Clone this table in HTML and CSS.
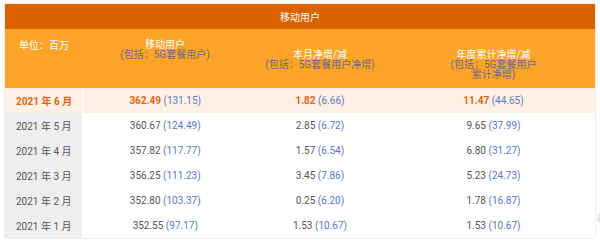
FILE: index.html
```html
<!DOCTYPE html>
<html lang="zh">
<head>
<meta charset="utf-8">
<link rel="stylesheet" href="styles.css">
</head>
<body>
<div class="wrap">
<table class="tbl">
  <colgroup>
    <col class="c1"><col class="c2"><col class="c3"><col class="c4">
  </colgroup>
  <thead>
    <tr class="title"><th colspan="4">移动用户</th></tr>
    <tr class="head">
      <th class="unit">单位：百万</th>
      <th class="h2">移动用户<br><span class="sub">(包括：5G套餐用户)</span></th>
      <th class="h3">本月净增/减<br><span class="sub">(包括：5G套餐用户净增)</span></th>
      <th class="h3">年度累计净增/减<br><span class="sub">(包括：5G套餐用户<br>累计净增)</span></th>
    </tr>
  </thead>
  <tbody>
    <tr class="hl">
      <td class="m">2021 年 6 月</td>
      <td><b>362.49</b> <span class="p">(131.15)</span></td>
      <td><b>1.82</b> <span class="p">(6.66)</span></td>
      <td><b>11.47</b> <span class="p">(44.65)</span></td>
    </tr>
    <tr>
      <td class="m">2021 年 5 月</td>
      <td>360.67 <span class="p">(124.49)</span></td>
      <td>2.85 <span class="p">(6.72)</span></td>
      <td>9.65 <span class="p">(37.99)</span></td>
    </tr>
    <tr>
      <td class="m">2021 年 4 月</td>
      <td>357.82 <span class="p">(117.77)</span></td>
      <td>1.57 <span class="p">(6.54)</span></td>
      <td>6.80 <span class="p">(31.27)</span></td>
    </tr>
    <tr>
      <td class="m">2021 年 3 月</td>
      <td>356.25 <span class="p">(111.23)</span></td>
      <td>3.45 <span class="p">(7.86)</span></td>
      <td>5.23 <span class="p">(24.73)</span></td>
    </tr>
    <tr>
      <td class="m">2021 年 2 月</td>
      <td>352.80 <span class="p">(103.37)</span></td>
      <td>0.25 <span class="p">(6.20)</span></td>
      <td>1.78 <span class="p">(16.87)</span></td>
    </tr>
    <tr>
      <td class="m">2021 年 1 月</td>
      <td>352.55 <span class="p">(97.17)</span></td>
      <td>1.53 <span class="p">(10.67)</span></td>
      <td>1.53 <span class="p">(10.67)</span></td>
    </tr>
  </tbody>
</table>
</div>
<div class="edge-btn"></div>
</body>
</html>
```

FILE: styles.css
```css
html, body {
  margin: 0;
  padding: 0;
  background: #ffffff;
}
body {
  font-family: "Roboto", "Noto Sans CJK SC", sans-serif;
  font-size: 10px;
  color: #555555;
  position: relative;
  overflow: hidden;
  height: 240px;
}
.wrap {
  margin: 4px 0 0 5px;
  width: 590px;
  box-shadow: 0 0 2px rgba(0, 0, 0, 0.18);
}
.tbl {
  width: 590px;
  border-collapse: collapse;
  table-layout: fixed;
}
.c1 { width: 77px; }
.c2 { width: 166px; }
.c3 { width: 144px; }
.c4 { width: 203px; }
.tbl th, .tbl td {
  padding: 0;
  font-weight: normal;
}
.title th {
  height: 25px;
  background: #dc6200;
  color: #ffffff;
  font-size: 10px;
  text-align: center;
  vertical-align: middle;
}
.head th {
  height: 59px;
  background: #fca428;
  color: #ffffff;
  vertical-align: top;
  text-align: center;
  line-height: 10px;
  padding-top: 11px;
  box-sizing: border-box;
}
.head th.unit {
  text-align: left;
  padding-left: 14px;
  padding-top: 12px;
}
.head th.h3 {
  padding-top: 21px;
}
.sub {
  color: #6c6a86;
}
.tbl td {
  height: 25px;
  text-align: center;
  vertical-align: middle;
  background: #ffffff;
}
.tbl td.m {
  text-align: left;
  padding-left: 11px;
  background: #efefef;
  border-right: 1px solid #ffffff;
}
.p {
  color: #5a78cc;
}
.hl td, .hl td.m {
  background: #fdf1e4;
}
.hl td.m, .hl b {
  color: #e2661a;
  font-weight: bold;
}
.edge-btn {
  position: absolute;
  left: 597px;
  top: 212px;
  width: 12px;
  height: 12px;
  border-radius: 50%;
  background: #e6e6e6;
}
```
